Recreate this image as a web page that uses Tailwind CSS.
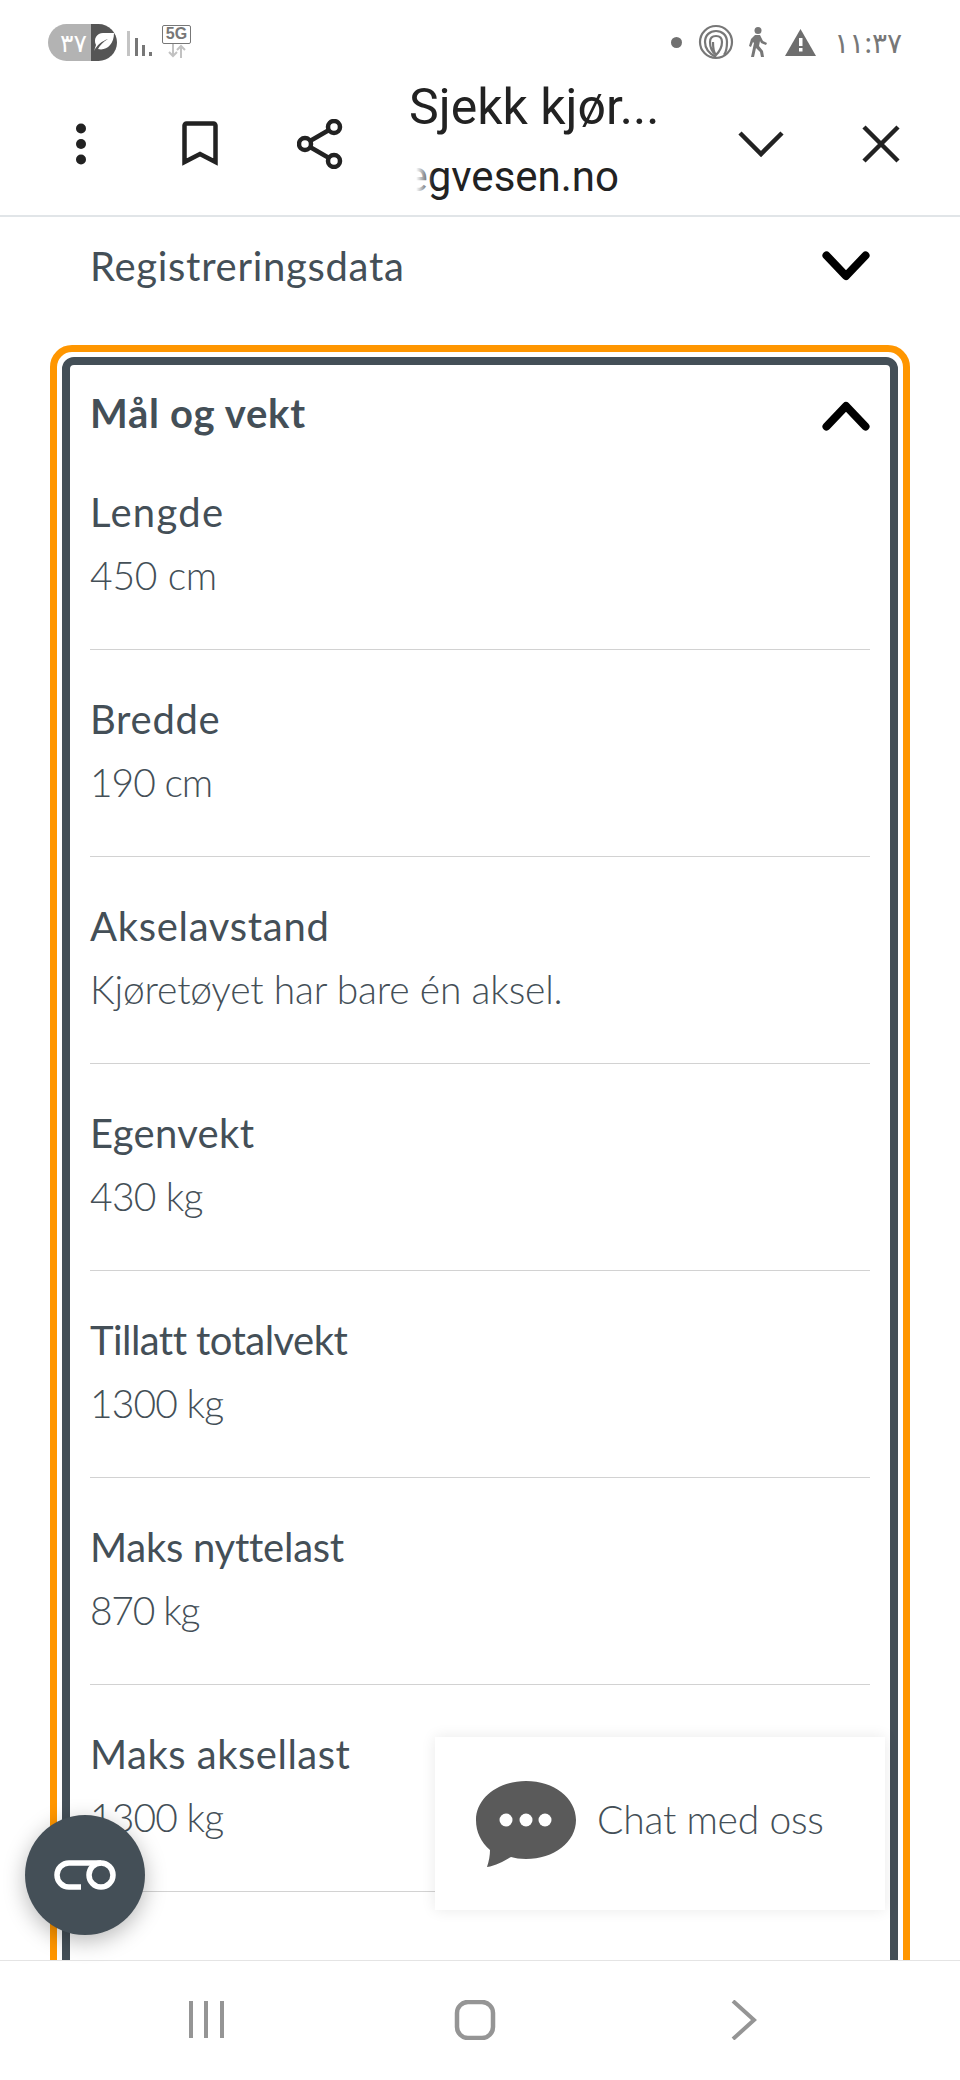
<!DOCTYPE html>
<html lang="en">
<head>
  <meta charset="UTF-8">
  <meta name="viewport" content="width=device-width, initial-scale=1.0">
  <title>Sjekk kjøretøy</title>
  <script src="https://cdn.jsdelivr.net/npm/@tailwindcss/browser@4"></script>
</head>
<body class="bg-white">
  <div class="relative flex flex-col w-[960px] h-[2080px] overflow-hidden bg-white font-['Lato',sans-serif]">

    <!-- status bar -->
    <div class="flex items-center justify-between h-[82px] pl-[48px] pr-[58px] pt-[2px] shrink-0">
      <div class="flex items-center">
        <div class="flex h-[37px] w-[69px] rounded-full overflow-hidden">
          <div class="flex items-center justify-center w-[43px] bg-[#b3b3b3] text-white text-[25px] font-['Noto_Sans','DejaVu_Sans',sans-serif] font-medium leading-none pl-[8px]">۳۷</div>
          <div class="flex items-center justify-center w-[26px] bg-[#555555]">
            <svg width="24" height="24" viewBox="0 0 24 24"><path d="M2 21 C5 15 10 11 16 9 C11 12 8 15 6 19 C14 21 22 15 22 3 L11 3 C5 3 1 9 4 15" fill="white"/></svg>
          </div>
        </div>
        <svg class="ml-[9px] mt-[4px]" width="26" height="26" viewBox="0 0 26 26">
          <rect x="1" y="0" width="3" height="25" fill="#c4c4c4"/>
          <rect x="9" y="7" width="3" height="18" fill="#777"/>
          <rect x="16" y="14" width="3" height="11" fill="#777"/>
          <rect x="23" y="21" width="3" height="4" fill="#777"/>
        </svg>
        <div class="flex flex-col items-center ml-[10px] mt-[-2px]">
          <div class="flex items-center justify-center w-[29px] h-[19px] border-[1.5px] border-[#777] rounded-[2px] text-[16px] leading-none font-bold text-[#777] font-['Liberation_Sans',sans-serif]">5G</div>
          <svg width="20" height="14" viewBox="0 0 20 14" fill="none" stroke="#c2c2c2" stroke-width="2">
            <path d="M6 0V12M2 8l4 4 4-4"/><path d="M14 14V2M10 6l4-4 4 4"/>
          </svg>
        </div>
      </div>
      <div class="flex items-center">
        <div class="w-[11px] h-[11px] rounded-full bg-[#707070] mr-[16px]"></div>
        <svg class="mr-[14px]" width="36" height="36" viewBox="0 0 36 36" fill="none" stroke="#777" stroke-width="2.2">
          <circle cx="18" cy="18" r="16"/>
          <path d="M26 31C29 27 29 22 29 18C29 11 24 7 18 7C12 7 7 11 7 18C7 25 12 30 18 33"/>
          <path d="M18 31C13 27 12 22 12 18C12 14 14 12 18 12C22 12 24 14 24 18C24 24 21 28 18 31C15 28 15 22 15 18"/>
        </svg>
        <svg class="mr-[17px]" width="20" height="30" viewBox="0 0 20 30" fill="#777">
          <circle cx="10" cy="3.500" r="3.500"/>
          <path d="M7 8h5l3 6 4 2-1 2-5-2-1-2-1 5 4 5 1 6h-3l-1-5-4-4-2 9H3l3-14-1-1-2 5-2-1 2-7z"/>
        </svg>
        <svg class="mr-[18px]" width="31" height="27" viewBox="0 0 31 27">
          <path d="M15.500 0L31 27H0z" fill="#6e6e6e"/>
          <rect x="14" y="9" width="3.500" height="8" fill="white"/>
          <rect x="14" y="19" width="3.500" height="3.500" fill="white"/>
        </svg>
        <span class="text-[28px] leading-none text-[#777] font-['Noto_Sans','DejaVu_Sans',sans-serif]">۱۱:۳۷</span>
      </div>
    </div>

    <!-- browser toolbar -->
    <div class="flex items-center h-[135px] pb-[10px] border-b-2 border-[#e1e5e8] shrink-0">
      <div class="flex items-center justify-center w-[162px]">
        <svg width="12" height="42" viewBox="0 0 12 42" fill="#222">
          <circle cx="6" cy="5.500" r="5"/><circle cx="6" cy="21" r="5"/><circle cx="6" cy="36.500" r="5"/>
        </svg>
      </div>
      <svg class="ml-[20px]" width="36" height="46" viewBox="0 0 36 46" fill="none" stroke="#222" stroke-width="4.500">
        <path d="M2.500 41V4.500a2 2 0 0 1 2-2h27a2 2 0 0 1 2 2V41L18 33z"/>
      </svg>
      <svg class="ml-[79px]" width="46" height="50" viewBox="0 0 46 50" fill="none" stroke="#222" stroke-width="4.500">
        <circle cx="37" cy="8" r="6"/><circle cx="8" cy="25" r="6"/><circle cx="37" cy="42" r="6"/>
        <path d="M13 22L32 11M13 28L32 39"/>
      </svg>
      <div class="w-[250px] ml-[66px] mt-[-7px] font-['Roboto',sans-serif] text-[#222]">
        <div class="text-[50px] leading-[54px] whitespace-nowrap">Sjekk kjør...</div>
        <div class="relative w-[210px] h-[46px] overflow-hidden flex justify-end text-[42px] leading-[46px] mt-[20px] whitespace-nowrap">
          <span>vegvesen.no</span>
          <div class="absolute left-0 top-0 w-[24px] h-full bg-gradient-to-r from-white from-30% to-transparent"></div>
        </div>
      </div>
      <svg class="ml-[79px]" width="46" height="28" viewBox="0 0 46 28" fill="none" stroke="#222" stroke-width="4.500">
        <path d="M2 3l21 21L44 3"/>
      </svg>
      <svg class="ml-[78px]" width="38" height="38" viewBox="0 0 38 38" fill="none" stroke="#222" stroke-width="4.500">
        <path d="M2 2l34 34M36 2L2 36"/>
      </svg>
    </div>

    <!-- page content -->
    <div class="flex-1 overflow-hidden px-[50px] text-[#444f57]">
      <div class="flex items-center justify-between h-[74px] pl-[40px] pr-[40px] mt-[12px]">
        <span class="text-[40px] tracking-[0.7px] leading-none">Registreringsdata</span>
        <svg width="48" height="30" viewBox="0 0 48 30" fill="none" stroke="#000" stroke-width="8" stroke-linecap="round" stroke-linejoin="round">
          <path d="M4.500 4.500L24 25L43.500 4.500"/>
        </svg>
      </div>
      <div class="mt-[42px] border-[7px] border-[#ff9600] rounded-[22px] p-[5px]">
        <div class="border-[8px] border-[#444f57] rounded-[12px] pl-[20px] pr-[20px] h-[1700px]">
          <div class="flex items-center justify-between h-[93px] pt-[2px]">
            <span class="text-[40px] tracking-[0.7px] font-bold leading-none">Mål og vekt</span>
            <svg class="mt-[6px]" width="48" height="30" viewBox="0 0 48 30" fill="none" stroke="#000" stroke-width="8" stroke-linecap="round" stroke-linejoin="round">
              <path d="M4.500 25.500L24 5L43.500 25.500"/>
            </svg>
          </div>
          <div class="flex flex-col h-[192px] pt-[29px] border-b-[1.5px] border-[#d2d2d2]">
            <span class="text-[40px] tracking-[1.3px] leading-[50px]">Lengde</span>
            <span class="text-[39px] tracking-[-0.2px] font-light leading-[50px] mt-[13px]">450 cm</span>
          </div>
          <div class="flex flex-col h-[207px] pt-[44px] border-b-[1.5px] border-[#d2d2d2]">
            <span class="text-[40px] tracking-[0.7px] leading-[50px]">Bredde</span>
            <span class="text-[39px] tracking-[-1px] font-light leading-[50px] mt-[13px]">190 cm</span>
          </div>
          <div class="flex flex-col h-[207px] pt-[44px] border-b-[1.5px] border-[#d2d2d2]">
            <span class="text-[40px] tracking-[0.7px] leading-[50px]">Akselavstand</span>
            <span class="text-[39px] tracking-[-0.2px] font-light leading-[50px] mt-[13px]">Kjøretøyet har bare én aksel.</span>
          </div>
          <div class="flex flex-col h-[207px] pt-[44px] border-b-[1.5px] border-[#d2d2d2]">
            <span class="text-[40px] tracking-[0.3px] leading-[50px]">Egenvekt</span>
            <span class="text-[39px] tracking-[-0.7px] font-light leading-[50px] mt-[13px]">430 kg</span>
          </div>
          <div class="flex flex-col h-[207px] pt-[44px] border-b-[1.5px] border-[#d2d2d2]">
            <span class="text-[40px] tracking-[-0.55px] leading-[50px]">Tillatt totalvekt</span>
            <span class="text-[39px] tracking-[-0.9px] font-light leading-[50px] mt-[13px]">1300 kg</span>
          </div>
          <div class="flex flex-col h-[207px] pt-[44px] border-b-[1.5px] border-[#d2d2d2]">
            <span class="text-[40px] tracking-[-0.25px] leading-[50px]">Maks nyttelast</span>
            <span class="text-[39px] tracking-[-1.300px] font-light leading-[50px] mt-[13px]">870 kg</span>
          </div>
          <div class="flex flex-col h-[207px] pt-[44px] border-b-[1.5px] border-[#d2d2d2]">
            <span class="text-[40px] tracking-[0.5px] leading-[50px]">Maks aksellast</span>
            <span class="text-[39px] tracking-[-0.9px] font-light leading-[50px] mt-[13px]">1300 kg</span>
          </div>
        </div>
      </div>
    </div>

    <!-- android nav -->
    <div class="relative h-[120px] border-t-[1.5px] border-[#e4e4e4] bg-white shrink-0 z-10">
      <svg class="absolute left-[187px] top-[39px]" width="40" height="40" viewBox="0 0 40 40" fill="none" stroke="#959595" stroke-width="4">
        <path d="M4 1v37M19 1v37M35 1v37"/>
      </svg>
      <svg class="absolute left-[454px] top-[39px]" width="42" height="40" viewBox="0 0 42 40" fill="none" stroke="#959595" stroke-width="4.500">
        <rect x="3" y="2" width="36" height="36" rx="11"/>
      </svg>
      <svg class="absolute left-[729px] top-[39px]" width="30" height="40" viewBox="0 0 30 40" fill="none" stroke="#959595" stroke-width="4">
        <path d="M4 1l21 19L4 39"/>
      </svg>
    </div>

    <!-- floating toggle button -->
    <div class="absolute left-[25px] top-[1815px] z-20 flex items-center justify-center w-[120px] h-[120px] rounded-full bg-[#444f57] shadow-[0_6px_22px_rgba(0,0,0,0.28)]">
      <svg width="62" height="30" viewBox="0 0 62 30" fill="none" stroke="white" stroke-width="5.500">
        <path d="M27 27H15a12 12 0 0 1 0-24H47"/>
        <circle cx="47" cy="15" r="12"/>
      </svg>
    </div>

    <!-- chat widget -->
    <div class="absolute left-[435px] top-[1737px] z-20 flex items-center w-[450px] h-[173px] bg-white shadow-[0_0_14px_rgba(0,0,0,0.09)]">
      <svg class="ml-[41px]" width="100" height="86" viewBox="0 0 100 86">
        <path d="M50 0C78 0 100 17 100 39C100 61 78 78 50 78C44 78 39 77 35 76C28 80 20 85 11 86C13 80 14 74 14 69C5 61 0 51 0 39C0 17 22 0 50 0Z" fill="#5a5a5a"/>
        <circle cx="30" cy="39" r="6.500" fill="white"/><circle cx="50" cy="39" r="6.500" fill="white"/><circle cx="69" cy="39" r="6.500" fill="white"/>
      </svg>
      <span class="ml-[21px] mb-[8px] text-[39px] tracking-[-0.2px] font-light leading-none text-[#444f57]">Chat med oss</span>
    </div>
  </div>
</body>
</html>
